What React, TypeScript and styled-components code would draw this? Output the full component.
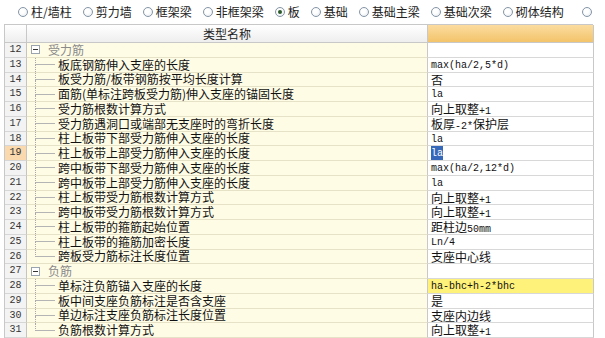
import styled, { createGlobalStyle } from "styled-components";

const GlobalStyle = createGlobalStyle`
  html, body {
    margin: 0;
    padding: 0;
    background: #ffffff;
  }
  body {
    font-family: "Noto Sans CJK SC", "Liberation Sans", sans-serif;
    color: #1a1a1a;
    overflow: hidden;
  }
`;

const Page = styled.div`
  width: 605px;
  height: 338px;
  display: flex;
  flex-direction: column;
`;

const RadioBar = styled.div`
  height: 25px;
  display: flex;
  align-items: center;
  gap: 11px;
  padding-left: 18px;
  white-space: nowrap;
  overflow: hidden;
`;

const RadioItem = styled.label<{ $wide?: boolean }>`
  display: flex;
  align-items: center;
  gap: 3px;
  font-size: 12px;
  line-height: 14px;
  color: #222;
  margin-left: ${(p) => (p.$wide ? "7px" : "0")};
`;

const RadioCircle = styled.span<{ $checked?: boolean }>`
  width: 10px;
  height: 10px;
  box-sizing: border-box;
  border-radius: 50%;
  border: 1px solid #8595a5;
  background: radial-gradient(circle at 40% 40%, #ffffff 30%, #e4e8ec 100%);
  display: flex;
  align-items: center;
  justify-content: center;
  flex-shrink: 0;
  &::after {
    content: "";
    width: 4px;
    height: 4px;
    border-radius: 50%;
    background: ${(p) => (p.$checked ? "#2a5a2a" : "transparent")};
  }
`;

const Table = styled.div`
  margin-left: 4px;
  width: 589px;
  display: grid;
  grid-template-columns: 22px 401px 166px;
  grid-auto-rows: 14.75px;
  grid-template-rows: 18px;
  border-top: 1px solid #c8c8c8;
  border-left: 1px solid #c8c8c8;
  box-sizing: border-box;
`;

const HeadCell = styled.div<{ $orange?: boolean }>`
  background: ${(p) =>
    p.$orange
      ? "linear-gradient(#fbdca0, #f3c46a)"
      : "linear-gradient(#ffffff, #eeeeee)"};
  border-right: 1px solid #c8c8c8;
  border-bottom: 1px solid #c8c8c8;
  font-size: 12px;
  line-height: 17px;
  text-align: center;
  color: #222;
`;

const NumCell = styled.div<{ $active?: boolean }>`
  background: ${(p) => (p.$active ? "#f9d9ad" : "#f3f3f3")};
  border-right: 1px solid #c4c4c4;
  border-bottom: 1px solid #d6d6d6;
  font-family: "Liberation Mono", monospace;
  font-size: 10px;
  line-height: 14px;
  text-align: center;
  color: #333;
  box-sizing: border-box;
`;

const NameCell = styled.div`
  background: #fffce6;
  border-right: 1px solid #c8c8c8;
  border-bottom: 1px solid #e6e2c8;
  display: flex;
  align-items: stretch;
  box-sizing: border-box;
  font-size: 12px;
  white-space: nowrap;
`;

const GroupToggle = styled.span`
  width: 9px;
  height: 9px;
  box-sizing: border-box;
  margin: auto 0 auto 4px;
  border: 1px solid #9aa4b0;
  background: #ffffff;
  display: flex;
  align-items: center;
  justify-content: center;
  &::after {
    content: "";
    width: 5px;
    height: 1px;
    background: #333;
  }
`;

const GroupLabel = styled.span`
  margin-left: 8px;
  color: #8a8a8a;
  line-height: 14px;
  align-self: center;
`;

const Guide = styled.span`
  width: 20px;
  margin-left: 8px;
  display: flex;
  flex-direction: column;
`;

const GuideTop = styled.span`
  flex: 1;
  border-left: 1px dotted #a8a8a8;
  border-bottom: 1px solid #b4b4b4;
`;

const GuideBottom = styled.span<{ $last?: boolean }>`
  flex: 1;
  border-left: 1px dotted ${(p) => (p.$last ? "transparent" : "#a8a8a8")};
`;

const NameText = styled.span`
  margin-left: 3px;
  line-height: 14px;
  align-self: center;
  color: #111;
`;

const ValueCell = styled.div<{ $highlight?: boolean }>`
  background: ${(p) => (p.$highlight ? "#fff27a" : "#ffffff")};
  border-right: 1px solid #c8c8c8;
  border-bottom: 1px solid #d8d8d8;
  padding-left: 3px;
  box-sizing: border-box;
  display: flex;
  align-items: baseline;
  font-size: 12px;
  line-height: 14px;
  white-space: nowrap;
  color: #111;
`;

const Cjk = styled.span`
  line-height: 14px;
`;

const Ascii = styled.span`
  font-family: "Liberation Mono", monospace;
  font-size: 10px;
  line-height: 12px;
  margin-top: 2px;
`;

const Selected = styled.span`
  display: flex;
  align-items: baseline;
  background: #3568b8;
  color: #ffffff;
`;

type Row =
  | { n: number; group: string }
  | { n: number; name: string; value: string; last?: boolean };

const radios = [
  "柱/墙柱",
  "剪力墙",
  "框架梁",
  "非框架梁",
  "板",
  "基础",
  "基础主梁",
  "基础次梁",
  "砌体结构",
  "",
];

const rows: Row[] = [
  { n: 12, group: "受力筋" },
  { n: 13, name: "板底钢筋伸入支座的长度", value: "max(ha/2,5*d)" },
  { n: 14, name: "板受力筋/板带钢筋按平均长度计算", value: "否" },
  { n: 15, name: "面筋(单标注跨板受力筋)伸入支座的锚固长度", value: "la" },
  { n: 16, name: "受力筋根数计算方式", value: "向上取整+1" },
  { n: 17, name: "受力筋遇洞口或端部无支座时的弯折长度", value: "板厚-2*保护层" },
  { n: 18, name: "柱上板带下部受力筋伸入支座的长度", value: "la" },
  { n: 19, name: "柱上板带上部受力筋伸入支座的长度", value: "la" },
  { n: 20, name: "跨中板带下部受力筋伸入支座的长度", value: "max(ha/2,12*d)" },
  { n: 21, name: "跨中板带上部受力筋伸入支座的长度", value: "la" },
  { n: 22, name: "柱上板带受力筋根数计算方式", value: "向上取整+1" },
  { n: 23, name: "跨中板带受力筋根数计算方式", value: "向上取整+1" },
  { n: 24, name: "柱上板带的箍筋起始位置", value: "距柱边50mm" },
  { n: 25, name: "柱上板带的箍筋加密长度", value: "Ln/4" },
  { n: 26, name: "跨板受力筋标注长度位置", value: "支座中心线", last: true },
  { n: 27, group: "负筋" },
  { n: 28, name: "单标注负筋锚入支座的长度", value: "ha-bhc+h-2*bhc" },
  { n: 29, name: "板中间支座负筋标注是否含支座", value: "是" },
  { n: 30, name: "单边标注支座负筋标注长度位置", value: "支座内边线" },
  { n: 31, name: "负筋根数计算方式", value: "向上取整+1", last: true },
];

const ACTIVE_ROW = 19;
const HIGHLIGHT_ROW = 28;

// split a value into ascii runs (small mono) and CJK runs
function renderValue(text: string) {
  const parts = text.match(/[\x20-\x7e]+|[^\x20-\x7e]+/g) ?? [];
  return parts.map((p, i) =>
    /^[\x20-\x7e]+$/.test(p) ? <Ascii key={i}>{p}</Ascii> : <Cjk key={i}>{p}</Cjk>
  );
}

function App() {
  return (
    <Page>
      <GlobalStyle />
      <RadioBar>
        {radios.map((r, i) => (
          <RadioItem key={i} $wide={r === ""}>
            <RadioCircle $checked={r === "板"} />
            {r}
          </RadioItem>
        ))}
      </RadioBar>
      <Table>
        <HeadCell />
        <HeadCell>类型名称</HeadCell>
        <HeadCell $orange />
        {rows.map((row) =>
          "group" in row ? (
            [
              <NumCell key={`n${row.n}`}>{row.n}</NumCell>,
              <NameCell key={`a${row.n}`}>
                <GroupToggle />
                <GroupLabel>{row.group}</GroupLabel>
              </NameCell>,
              <ValueCell key={`v${row.n}`} />,
            ]
          ) : (
            [
              <NumCell key={`n${row.n}`} $active={row.n === ACTIVE_ROW}>
                {row.n}
              </NumCell>,
              <NameCell key={`a${row.n}`}>
                <Guide>
                  <GuideTop />
                  <GuideBottom $last={row.last} />
                </Guide>
                <NameText>{row.name}</NameText>
              </NameCell>,
              <ValueCell key={`v${row.n}`} $highlight={row.n === HIGHLIGHT_ROW}>
                {row.n === ACTIVE_ROW ? (
                  <Selected>{renderValue(row.value)}</Selected>
                ) : (
                  renderValue(row.value)
                )}
              </ValueCell>,
            ]
          )
        )}
      </Table>
    </Page>
  );
}

export default App;
